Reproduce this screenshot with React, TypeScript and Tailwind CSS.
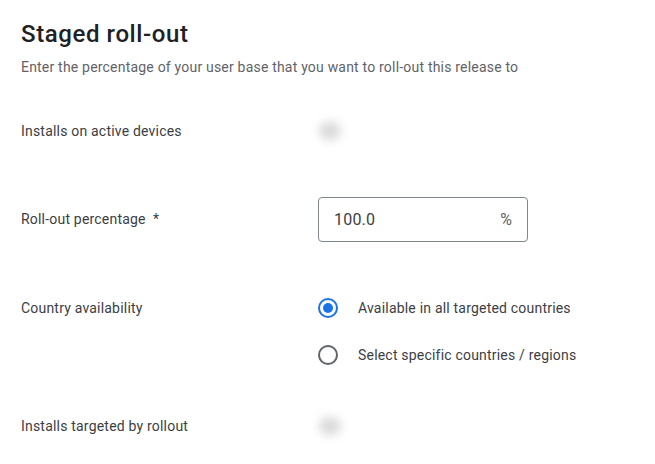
import { useState } from "react";

function Blur() {
  return (
    <div className="flex h-[28px] w-[28px] items-center justify-center">
      <div className="h-[18px] w-[22px] rounded-full bg-[#dadada] blur-[5px]" />
    </div>
  );
}

function Radio({ checked, label, onClick }: { checked: boolean; label: string; onClick: () => void }) {
  return (
    <button onClick={onClick} className="flex h-[40px] items-center text-left">
      <span
        className={
          checked
            ? "flex h-[20px] w-[20px] items-center justify-center rounded-full border-2 border-[#1a73e8]"
            : "flex h-[20px] w-[20px] items-center justify-center rounded-full border-2 border-[#5f6368]"
        }
      >
        {checked && <span className="h-[10px] w-[10px] rounded-full bg-[#1a73e8]" />}
      </span>
      <span className="ml-[20px] text-[14px] tracking-[0.2px] text-[#3c4043]">{label}</span>
    </button>
  );
}

export default function App() {
  const [scope, setScope] = useState("all");

  return (
    <div className="min-h-[464px] w-full bg-white px-[21px] pt-[18px] font-['Roboto',sans-serif]">
      <h1 className="text-[24px] leading-[32px] font-medium tracking-[0.6px] text-[#202124]">Staged roll-out</h1>
      <p className="mt-[7px] text-[14px] leading-[20px] tracking-[0.2px] text-[#5f6368]">
        Enter the percentage of your user base that you want to roll-out this release to
      </p>

      <div className="mt-[32px] flex h-[44px] items-center">
        <div className="w-[295px] text-[14px] tracking-[0.2px] text-[#3c4043]">Installs on active devices</div>
        <Blur />
      </div>

      <div className="mt-[44px] flex h-[45px] items-center">
        <div className="w-[297px] text-[14px] tracking-[0.2px] text-[#3c4043]">Roll-out percentage &nbsp;*</div>
        <div className="flex h-[45px] w-[210px] items-center justify-between rounded-[4px] border border-[#80868b] px-[15px]">
          <span className="text-[16px] tracking-[0.2px] text-[#3c4043]">100.0</span>
          <span className="text-[16px] text-[#5f6368]">%</span>
        </div>
      </div>

      <div className="mt-[46px] flex items-start">
        <div className="flex h-[40px] w-[297px] items-center text-[14px] tracking-[0.2px] text-[#3c4043]">
          Country availability
        </div>
        <div className="flex flex-col gap-[7px]">
          <Radio checked={scope === "all"} label="Available in all targeted countries" onClick={() => setScope("all")} />
          <Radio
            checked={scope === "specific"}
            label="Select specific countries / regions"
            onClick={() => setScope("specific")}
          />
        </div>
      </div>

      <div className="mt-[29px] flex h-[44px] items-center">
        <div className="w-[295px] text-[14px] tracking-[0.2px] text-[#3c4043]">Installs targeted by rollout</div>
        <Blur />
      </div>
    </div>
  );
}
